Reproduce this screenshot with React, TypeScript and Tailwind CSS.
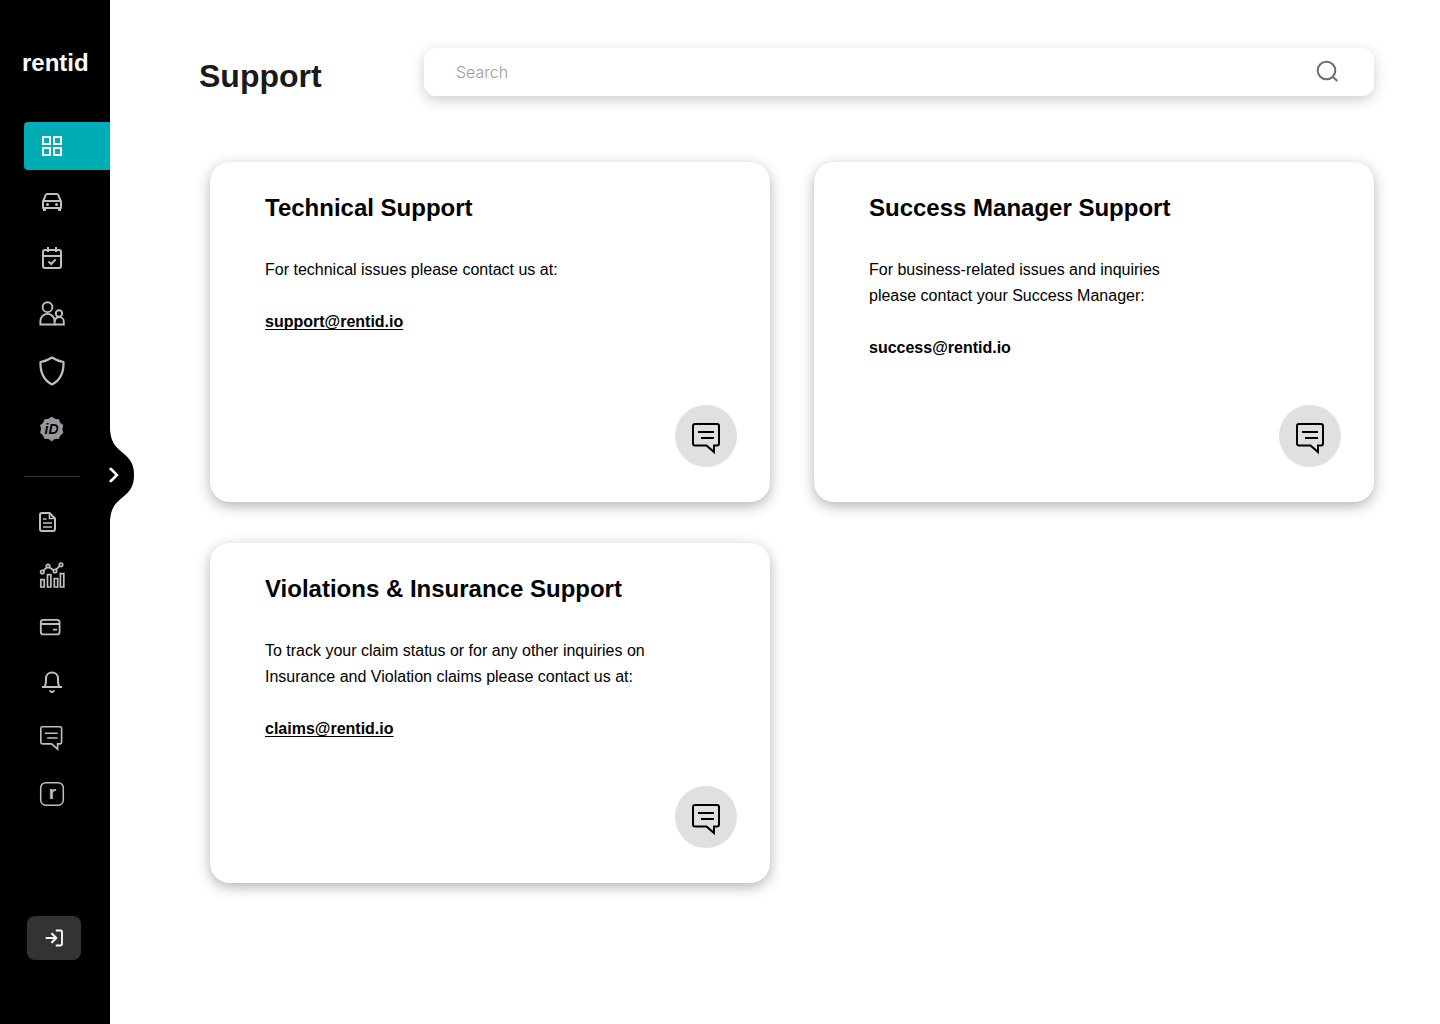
import type { ReactNode } from "react";

function Glyph({ children, width = 2 }: { children: ReactNode; width?: number }) {
  return (
    <svg
      viewBox="0 0 32 32"
      className="size-8 overflow-visible"
      fill="none"
      stroke="currentColor"
      strokeWidth={width}
      aria-hidden="true"
    >
      {children}
    </svg>
  );
}

function ChatShape() {
  return (
    <>
      <path d="M22 29V22.4h3a2 2 0 0 0 2-2V3a2 2 0 0 0-2-2H3a2 2 0 0 0-2 2v17.400a2 2 0 0 0 2 2h11.500z" />
      <path d="M6 9h16M9 15h13" />
    </>
  );
}

function badgePath(cx: number, cy: number) {
  const teeth = 10;
  let d = "";
  for (let i = 0; i < teeth; i++) {
    const a = (i / teeth) * Math.PI * 2 - Math.PI / 2;
    const b = a + Math.PI / teeth;
    const c = a + (2 * Math.PI) / teeth;
    const at = (ang: number, r: number) =>
      `${(cx + r * Math.cos(ang)).toFixed(2)} ${(cy + r * Math.sin(ang)).toFixed(2)}`;
    d += i === 0 ? `M${at(a, 11.4)}` : "";
    d += `Q${at(b, 9)} ${at(c, 11.4)}`;
  }
  return d + "Z";
}

const primary: { label: string; icon: ReactNode }[] = [
  {
    label: "Dashboard",
    icon: (
      <Glyph>
        <path d="M7 7h7v7H7zM18 7h7v7h-7zM7 18h7v7H7zM18 18h7v7h-7z" />
      </Glyph>
    ),
  },
  {
    label: "Vehicles",
    icon: (
      <Glyph>
        <path d="M7 15.500 9.800 8.900a1.500 1.500 0 0 1 1.400-.9h9.600a1.500 1.500 0 0 1 1.400.9L25 15.500V22H7z" strokeLinejoin="round" />
        <path d="M7.500 15h17" />
        <path d="M8.500 22v3M23.500 22v3" strokeWidth="3" />
        <circle cx="11.500" cy="18.500" r="1.500" fill="currentColor" stroke="none" />
        <circle cx="20.500" cy="18.500" r="1.500" fill="currentColor" stroke="none" />
      </Glyph>
    ),
  },
  {
    label: "Bookings",
    icon: (
      <Glyph>
        <rect x="7" y="8" width="18" height="18" rx="2" />
        <path d="M7 14h18M12 5v5M20 5v5M12.500 19.500l2.700 2.500 4.500-4.600" />
      </Glyph>
    ),
  },
  {
    label: "Customers",
    icon: (
      <Glyph width={1.9}>
        <circle cx="11.500" cy="9.200" r="4.900" />
        <path d="M4.400 26.500V23a7 7 0 0 1 14.200 0v3.500z" />
        <circle cx="23" cy="15.500" r="3.200" />
        <path d="M18.600 26.500H27.800V24a4.500 4.500 0 0 0-9.200-.5" />
      </Glyph>
    ),
  },
  {
    label: "Insurance",
    icon: (
      <Glyph width={2.2}>
        <path
          d="M16 3.500C12.500 5.800 8.500 7.400 4.500 8c-.4 10.500 3 18 11.500 22.500C24.500 26 27.900 18.500 27.500 8c-4-.6-8-2.200-11.500-4.500z"
          strokeLinejoin="round"
        />
      </Glyph>
    ),
  },
  {
    label: "Verification",
    icon: (
      <Glyph>
        <path d={badgePath(15.7, 19)} fill="#999" stroke="#999" strokeWidth="1.400" strokeLinejoin="round" />
        <text
          x="15.500"
          y="24"
          textAnchor="middle"
          fill="#000"
          stroke="none"
          className="font-['Liberation_Sans',sans-serif] text-[14px] font-bold italic"
        >
          iD
        </text>
      </Glyph>
    ),
  },
];

const secondary: { label: string; icon: ReactNode }[] = [
  {
    label: "Documents",
    icon: (
      <Glyph>
        <path d="M13.500 7H6a2 2 0 0 0-2 2v14a2 2 0 0 0 2 2h11a2 2 0 0 0 2-2V12.500z" strokeLinejoin="round" />
        <path d="M13.500 7v5.500H19M7 13h3.500M7 17h9M7 21h9" strokeWidth="1.600" />
      </Glyph>
    ),
  },
  {
    label: "Analytics",
    icon: (
      <Glyph width={1.7}>
        <path d="M4.800 19.700h3.400v7.300H4.800zM11.500 14.700h3.400V27h-3.400zM18.300 18.500h3.400V27h-3.400zM24.400 13.700h3.400V27h-3.400zM7.400 10.600 11 7.200M13.200 7.200l4.600 3M20 9.600l3.800-3.800" />
        <circle cx="6.300" cy="12" r="1.700" />
        <circle cx="12" cy="6" r="1.700" />
        <circle cx="19" cy="11" r="1.700" />
        <circle cx="25" cy="4.700" r="1.700" />
      </Glyph>
    ),
  },
  {
    label: "Payments",
    icon: (
      <Glyph width={1.8}>
        <rect x="4.800" y="5.800" width="18.800" height="14.600" rx="2.500" />
        <path d="M5 10h18.500M17 15.700h4" />
      </Glyph>
    ),
  },
  {
    label: "Notifications",
    icon: (
      <Glyph>
        <path d="M6 19h20M8.600 19c1-1.500 1.400-3.500 1.400-8.500 0-8 12-8 12 0 0 5 .4 7 1.400 8.500" />
        <path d="M13.600 22.500q2.400 3 4.800 0" />
      </Glyph>
    ),
  },
  {
    label: "Support",
    icon: (
      <Glyph>
        <g transform="translate(4 4) scale(.8)">
          <ChatShape />
        </g>
      </Glyph>
    ),
  },
  {
    label: "Rentid account",
    icon: (
      <Glyph width={1.5}>
        <rect x="4.700" y="6.700" width="22.600" height="22.600" rx="5" />
        <text
          x="16.500"
          y="23"
          textAnchor="middle"
          fill="currentColor"
          stroke="none"
          className="font-['Liberation_Sans',sans-serif] text-[19px] font-bold"
        >
          r
        </text>
      </Glyph>
    ),
  },
];

const cards = [
  {
    title: "Technical Support",
    text: "For technical issues please contact us at:",
    email: "support@rentid.io",
    underline: true,
  },
  {
    title: "Success Manager Support",
    text: "For business-related issues and inquiries\nplease contact your Success Manager:",
    email: "success@rentid.io",
    underline: false,
  },
  {
    title: "Violations & Insurance Support",
    text: "To track your claim status or for any other inquiries on\nInsurance and Violation claims please contact us at:",
    email: "claims@rentid.io",
    underline: true,
  },
];

function Sidebar() {
  return (
    <aside className="relative flex w-[110px] shrink-0 flex-col bg-black pt-12 pb-16 text-[#c0c0c0]">
      <a href="#home" className="mb-11 pl-[22px] text-2xl leading-[30px] font-bold text-white">
        rentid
      </a>
      <nav aria-label="Main" className="flex flex-col">
        <div className="flex flex-col gap-2">
          {primary.map((item, i) => (
            <a
              key={item.label}
              href={"#" + item.label.toLowerCase()}
              aria-label={item.label}
              className={
                i === 0
                  ? "ml-6 flex h-12 items-center rounded-l bg-[#00adb5] pl-3 text-white"
                  : "ml-6 flex h-12 items-center pl-3"
              }
            >
              {item.icon}
            </a>
          ))}
        </div>
        <hr className="mx-6 mt-[26px] mb-[18px] w-14 border-[#333]" />
        <div className="flex flex-col">
          {secondary.map((item) => (
            <a
              key={item.label}
              href={"#" + item.label.toLowerCase().replace(" ", "-")}
              aria-label={item.label}
              className="ml-6 flex h-[54px] items-center pl-3"
            >
              {item.icon}
            </a>
          ))}
        </div>
      </nav>
      <button
        type="button"
        aria-label="Log out"
        className="mt-auto ml-[27px] flex h-11 w-[54px] items-center justify-center rounded-lg bg-[#333] text-white"
      >
        <svg
          viewBox="0 0 24 24"
          className="size-6"
          fill="none"
          stroke="currentColor"
          strokeWidth="2"
          strokeLinecap="round"
          strokeLinejoin="round"
          aria-hidden="true"
        >
          <path d="M4.500 12H14M10 7.800l4.300 4.200-4.300 4.200" />
          <path d="M14.500 4.500h4a1.500 1.500 0 0 1 1.500 1.500v12a1.500 1.500 0 0 1-1.500 1.500h-4" strokeWidth="1.800" />
        </svg>
      </button>
      <button type="button" aria-label="Expand menu" className="absolute top-[430px] left-[104px]">
        <svg viewBox="-6 0 30 90" className="h-[90px] w-[30px]" aria-hidden="true">
          <path d="M-6 0H0C1 8 2 11 5.500 16C10.500 22 17 25 20.500 31C23 35 24 39 24 45C24 51 23 55 20.500 59C17 65 10.500 68 5.500 74C2 79 1 82 0 90H-6Z" fill="#000" />
          <path d="M-.5 39H1L7 45 1 51H-.5" fill="none" stroke="#fff" strokeWidth="2.600" />
        </svg>
      </button>
    </aside>
  );
}

export default function App() {
  return (
    <div className="flex min-h-screen bg-white font-['Liberation_Sans',Arial,sans-serif] text-black">
      <Sidebar />
      <main className="min-w-0 flex-1 pt-12 pr-[66px] pb-12 pl-[89px]">
        <header className="flex items-start">
          <h1 className="w-[225px] shrink-0 pt-2 text-[32px] leading-10 font-bold text-[#1a1a1a]">Support</h1>
          <form
            role="search"
            className="flex h-12 flex-1 items-center rounded-xl bg-white pr-[34px] pl-8 shadow-[0_4px_14px_rgba(0,0,0,0.2)]"
          >
            <input
              type="search"
              aria-label="Search"
              placeholder="Search"
              className="min-w-0 flex-1 bg-transparent font-[Inter,sans-serif] text-base font-light outline-none placeholder:text-[#9a9a9a]"
            />
            <button type="submit" aria-label="Search" className="text-[#6b6b7b]">
              <svg viewBox="0 0 24 24" className="size-6" fill="none" stroke="currentColor" strokeWidth="2" aria-hidden="true">
                <circle cx="10.500" cy="10.500" r="8.800" />
                <path d="M16.500 16.500 21.300 21" />
              </svg>
            </button>
          </form>
        </header>
        <div className="mt-[66px] ml-[11px] grid grid-cols-2 gap-x-11 gap-y-[41px]">
          {cards.map((card) => (
            <section
              key={card.title}
              className="flex min-h-[340px] flex-col rounded-[20px] bg-white pt-[30px] pr-[33px] pb-[35px] pl-[55px] shadow-[0_4px_14px_rgba(0,0,0,0.3)]"
            >
              <h2 className="text-2xl leading-8 font-bold">{card.title}</h2>
              <p className="mt-[33px] text-base leading-[26px] whitespace-pre-line">{card.text}</p>
              <a
                href={"mailto:" + card.email}
                className={
                  card.underline
                    ? "mt-[26px] self-start text-base leading-[26px] font-bold underline decoration-1 underline-offset-2 [text-decoration-skip-ink:none]"
                    : "mt-[26px] self-start text-base leading-[26px] font-bold"
                }
              >
                {card.email}
              </a>
              <button
                type="button"
                aria-label={"Chat with " + card.title}
                className="mt-auto flex size-[62px] items-center justify-center self-end rounded-full bg-[#dfe0e2] pt-0.5"
              >
                <svg viewBox="0 0 28 28" className="size-7 overflow-visible" fill="none" stroke="currentColor" strokeWidth="2" aria-hidden="true">
                  <ChatShape />
                </svg>
              </button>
            </section>
          ))}
        </div>
      </main>
    </div>
  );
}
